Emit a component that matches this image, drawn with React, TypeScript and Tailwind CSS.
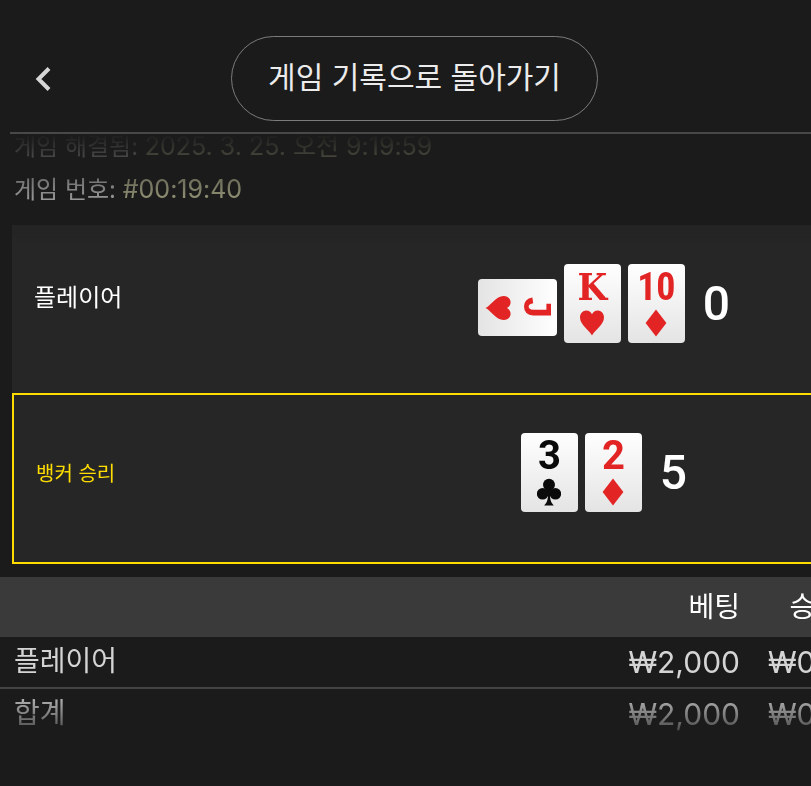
import type { ReactNode } from 'react'

type Suit = 'heart' | 'diamond' | 'club'

interface Card {
  rank: string
  suit: Suit
  sideways?: boolean
}

const SuitIcon = ({ suit }: { suit: Suit }) => (
  <svg viewBox="0 0 24 28" className="w-6 h-7" fill="currentColor" aria-hidden="true">
    {suit === 'heart' && (
      <path d="M12 26.5C10 21.5 0 16 0 8.4C0 4.3 2.8 1.4 6.2 1.4C8.9 1.4 11 3 12 5.2C13 3 15.1 1.4 17.8 1.4C21.2 1.4 24 4.3 24 8.4C24 16 14 21.5 12 26.5Z" />
    )}
    {suit === 'diamond' && <path d="M12 0.5L22.4 14L12 27.5L1.6 14Z" />}
    {suit === 'club' && (
      <>
        <circle cx="12" cy="6.8" r="6" />
        <circle cx="5.6" cy="15.8" r="5.8" />
        <circle cx="18.4" cy="15.8" r="5.8" />
        <path d="M10 11H14V17H13C13.2 22 14 24.6 16.8 27.4H7.2C10 24.6 10.8 22 11 17H10Z" />
      </>
    )}
  </svg>
)

const rankFont = (rank: string) => {
  if (rank === '10') return "text-[38px] leading-[38px] font-['Roboto_Condensed','Open_Sans_Condensed','Roboto',sans-serif]"
  if (rank === 'J') return "text-[40px] leading-[38px] font-['Liberation_Mono',monospace]"
  if (rank === 'K') return "text-[38px] leading-[38px] font-['DejaVu_Serif_Condensed','DejaVu_Serif',serif]"
  return "text-[40px] leading-[38px] font-['Roboto',sans-serif]"
}

const PlayingCard = ({ rank, suit, sideways }: Card) => {
  const face = (
    <div
      className={`flex h-[79px] w-[57px] shrink-0 flex-col items-center gap-[3px] rounded bg-linear-to-b from-white to-[#e4e4e4] pt-1 ${
        suit === 'club' ? 'text-[#0b0b0b]' : 'text-[#e22424]'
      } ${sideways ? 'rotate-90' : ''}`}
    >
      <span className={`font-bold ${rankFont(rank)}`}>{rank}</span>
      <SuitIcon suit={suit} />
    </div>
  )

  if (!sideways) return face
  return <div className="mb-[7px] flex h-[57px] w-[79px] items-center justify-center self-end">{face}</div>
}

const Hand = ({ cards, total }: { cards: Card[]; total: number }) => (
  <div className="flex w-[414px] items-center justify-center gap-[18px]">
    <div className="flex gap-[7px]">
      {cards.map(card => (
        <PlayingCard key={card.rank} {...card} />
      ))}
    </div>
    <span className="text-5xl font-medium text-white font-['Roboto',sans-serif]">{total}</span>
  </div>
)

const InfoLine = ({ label, children }: { label: string; children: ReactNode }) => (
  <p className="text-2xl leading-[42px] whitespace-nowrap text-[#ececec]">
    {label}: <span className="text-[25px] text-[#e2e2b4]">{children}</span>
  </p>
)

const playerCards: Card[] = [
  { rank: 'J', suit: 'heart', sideways: true },
  { rank: 'K', suit: 'heart' },
  { rank: '10', suit: 'diamond' },
]

const bankerCards: Card[] = [
  { rank: '3', suit: 'club' },
  { rank: '2', suit: 'diamond' },
]

const rows = [
  { label: '플레이어', bet: '₩2,000', win: '₩0' },
  { label: '합계', bet: '₩2,000', win: '₩0' },
]

const App = () => {
  return (
    <div className="min-h-screen overflow-hidden bg-[#1b1b1b] font-['Inter','Noto_Sans_CJK_KR',sans-serif]">
      <header className="ml-2.5 grid grid-cols-[72px_1fr_64px] border-b-2 border-[#484848] pt-9 pb-[11px]">
        <button type="button" aria-label="뒤로" className="flex items-center pl-6 text-[#d6d6d6]">
          <svg viewBox="0 0 18 26" className="h-[26px] w-[18px]" fill="none" stroke="currentColor" strokeWidth="4">
            <path d="M15 2.5L4.5 13L15 23.5" />
          </svg>
        </button>
        <button
          type="button"
          className="h-[85px] justify-self-center rounded-full border border-[#7c7c7c] px-9 pb-1 text-3xl whitespace-nowrap text-[#ececec]"
        >
          게임 기록으로 돌아가기
        </button>
      </header>

      <main className="overflow-hidden pb-2 [mask-image:linear-gradient(to_bottom,transparent,black_110px,black_calc(100%-60px),transparent)]">
        <section className="-mt-[9px] pb-3.5 pl-3.5">
          <InfoLine label="게임 해결됨">2025. 3. 25. 오전 9:19:59</InfoLine>
          <InfoLine label="게임 번호">#00:19:40</InfoLine>
        </section>

        {/* Hands */}
        <section className="ml-3 bg-[#262626]">
          <div className="flex h-[168px] items-start justify-between pt-[39px] pl-[22px]">
            <h2 className="pt-[18px] text-2xl whitespace-nowrap text-white">플레이어</h2>
            <Hand cards={playerCards} total={0} />
          </div>
          <div className="-mr-0.5 flex h-[171px] items-start justify-between border-2 border-[#ffdc00] pt-[38px] pl-[22px]">
            <h2 className="pt-[27px] text-xl whitespace-nowrap text-[#ffdc00]">뱅커 승리</h2>
            <Hand cards={bankerCards} total={5} />
          </div>
        </section>

        {/* Bets, the last column runs past the screen edge */}
        <div className="mt-[13px] -mr-11">
          <table className="w-full text-left whitespace-nowrap">
            <thead className="h-[60px] bg-[#3a3a3a] text-[28px] text-white">
              <tr>
                <th className="font-normal" aria-label="항목"></th>
                <th className="text-right font-normal">베팅</th>
                <th className="w-[115px] pr-3.5 text-right font-normal">승리</th>
              </tr>
            </thead>
            <tbody className="text-3xl text-[#d4d4d4]">
              {rows.map(row => (
                <tr key={row.label} className="h-[51px] border-b-2 border-[#454545] last:border-b-0">
                  <th className="pl-3.5 text-[28px] font-normal">{row.label}</th>
                  <td className="text-right">{row.bet}</td>
                  <td className="pl-7">{row.win}</td>
                </tr>
              ))}
            </tbody>
          </table>
        </div>
      </main>
    </div>
  )
}

export default App
